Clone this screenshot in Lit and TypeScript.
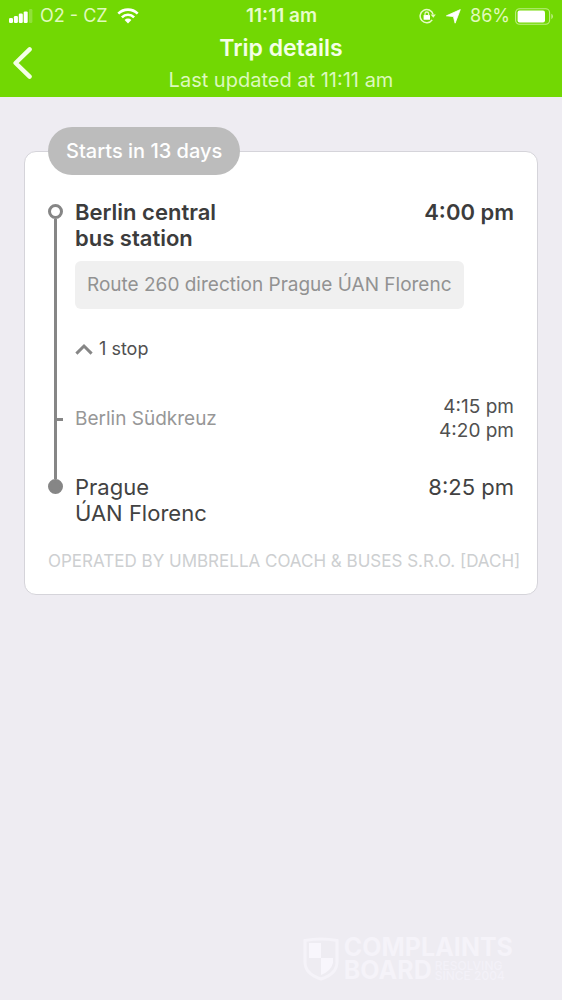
import { LitElement, html, css, svg } from "lit";
import { customElement, property, state } from "lit/decorators.js";

@customElement("status-bar")
class StatusBar extends LitElement {
  static styles = css`
    :host {
      display: grid;
      grid-template-columns: 1fr auto 1fr;
      align-items: center;
      height: 32px;
      padding: 0 8px 0 9px;
      font-size: 18px;
      line-height: 24px;
      color: #e0fabc;
    }
    .side {
      display: flex;
      align-items: center;
    }
    .carrier {
      margin: 0 9px 0 7px;
    }
    .clock {
      font-size: 19px;
      font-weight: 600;
      color: #e8fccb;
    }
    .right {
      justify-content: flex-end;
    }
    .lock {
      margin-right: 10px;
    }
    .arrow {
      margin-right: 9px;
    }
    .level {
      margin-right: 5px;
    }
    svg {
      display: block;
      flex: none;
    }
  `;

  render() {
    return html`
      <div class="side">
        <svg width="24" height="14" viewBox="0 0 24 14" fill="#fff" aria-label="Signal" role="img">
          <rect x="0" y="9" width="4" height="5" rx="1.2" />
          <rect x="4.9" y="7" width="4" height="7" rx="1.2" />
          <rect x="9.8" y="4.6" width="4" height="9.4" rx="1.2" />
          <rect x="14.7" y="2.4" width="4" height="11.6" rx="1.2" />
          <rect x="20" y="0" width="3.4" height="14" rx="1.2" opacity=".22" />
        </svg>
        <span class="carrier">O2 - CZ</span>
        <svg width="22" height="16" viewBox="0 0 22 16" fill="none" stroke="#fff" stroke-width="2.6" aria-label="Wi-Fi" role="img">
          <path d="M1.3 5.6a13.8 13.8 0 0 1 19.4 0" />
          <path d="M4.9 9.3a8.6 8.6 0 0 1 12.2 0" />
          <path d="M11 15.4 7.6 12a4.8 4.8 0 0 1 6.8 0Z" fill="#fff" stroke="none" />
        </svg>
      </div>
      <span class="clock">11:11 am</span>
      <div class="side right">
        <svg class="lock" width="17" height="16" viewBox="0 0 17 16" fill="none" stroke="#e6fbc6" stroke-width="1.5" aria-label="Rotation lock" role="img">
          <path d="M14.1 6.4A6.6 6.6 0 1 0 13.2 11.8" />
          <path d="M11.6 6.4h5.2l-2.5 3.4Z" fill="#e6fbc6" stroke="none" />
          <rect x="4.6" y="7" width="6.4" height="4.8" rx=".6" fill="#fff" stroke="none" />
          <path d="M6 7.4V5.8a1.8 1.8 0 0 1 3.6 0v1.6" stroke-width="1.3" />
        </svg>
        <svg class="arrow" width="15" height="15" viewBox="0 0 15 15" fill="#fff" aria-label="Location" role="img">
          <path d="M14.3.6 9.1 14.2 7.4 7.6.4 6.8Z" stroke="#fff" stroke-width=".8" stroke-linejoin="round" />
        </svg>
        <span class="level">86%</span>
        <svg width="39" height="17" viewBox="0 0 39 17" aria-label="Battery" role="img">
          <rect x=".6" y=".7" width="34" height="15.6" rx="4" fill="none" stroke="#bdee85" stroke-width="1.1" />
          <rect x="2.6" y="2.6" width="27.4" height="11.8" rx="2" fill="#fff" />
          <path d="M36.3 5.8a3 3 0 0 1 0 5.4Z" fill="#bdee85" />
        </svg>
      </div>
    `;
  }
}

@customElement("board-watermark")
class BoardWatermark extends LitElement {
  static styles = css`
    :host {
      display: flex;
      align-items: center;
      gap: 5px;
      color: #f5f3f9;
    }
    .name {
      display: grid;
      grid-template-columns: auto 1fr;
      column-gap: 3px;
      align-items: center;
      font-size: 25px;
      line-height: 23px;
      font-weight: 700;
    }
    .wide {
      grid-column: 1 / -1;
    }
    .tag {
      font-size: 12px;
      line-height: 10px;
      font-weight: 500;
      color: #f3f1f8;
    }
    svg {
      display: block;
      flex: none;
    }
  `;

  render() {
    return html`
      <svg width="36" height="44" viewBox="0 0 36 44" aria-hidden="true">
        <path d="M2 3.5Q18 .5 34 3.5V25Q34 37 18 42 2 37 2 25Z" fill="none" stroke="#f5f3f9" stroke-width="3" />
        <path d="M6 6h12v15H6ZM18 21h12v5q-2 8-12 12Z" fill="#f8f6fc" />
      </svg>
      <div class="name">
        <span class="wide">COMPLAINTS</span>
        <span>BOARD</span>
        <span class="tag">RESOLVING<br />SINCE 2004</span>
      </div>
    `;
  }
}

@customElement("trip-card")
class TripCard extends LitElement {
  @property() badge = "";
  @state() private open = true;

  static styles = css`
    :host {
      display: block;
    }
    .card {
      position: relative;
      padding: 47px 23px 21px;
      background: #fff;
      border: 1px solid #d5d4da;
      border-radius: 12px;
    }
    .badge {
      position: absolute;
      top: -25px;
      left: 23px;
      padding: 12px 18px;
      border-radius: 24px;
      background: #bcbcbc;
      color: #fff;
      font-size: 20px;
      line-height: 24px;
      font-weight: 500;
      white-space: nowrap;
    }
    .row {
      display: grid;
      grid-template-columns: 15px 1fr auto;
      column-gap: 12px;
    }
    .rail {
      display: flex;
      flex-direction: column;
      align-items: center;
    }
    .line {
      flex: 1;
      width: 3px;
      background: #868686;
    }
    .lead {
      flex: none;
      height: 5px;
    }
    .blank {
      background: none;
    }
    .dot {
      box-sizing: border-box;
      width: 15px;
      height: 15px;
      border: 3px solid #868686;
      border-radius: 50%;
    }
    .solid {
      background: #868686;
    }
    .tick {
      align-self: flex-end;
      width: 9px;
      height: 3px;
      background: #868686;
    }
    .place {
      font-size: 22px;
      line-height: 26px;
      color: #424242;
    }
    .strong {
      font-weight: 600;
      color: #3c3c3c;
    }
    .route {
      justify-self: start;
      margin: 10px 0 28px;
      padding: 12px;
      border-radius: 6px;
      background: #f0f0f0;
      color: #929292;
      font-size: 19px;
      line-height: 24px;
    }
    .toggle {
      display: flex;
      align-items: center;
      gap: 6px;
      justify-self: start;
      margin: 0 0 34px;
      padding: 0;
      border: 0;
      background: none;
      color: #505050;
      font: inherit;
      font-size: 18px;
      line-height: 24px;
      cursor: pointer;
    }
    .via {
      align-self: center;
      font-size: 19px;
      line-height: 24px;
      color: #979797;
    }
    .times {
      font-size: 19px;
      line-height: 24px;
      text-align: right;
      color: #505050;
    }
    .gap {
      height: 31px;
    }
    .operator {
      margin: 23px -12px 0 0;
      font-size: 17px;
      line-height: 24px;
      color: #cdcfd1;
      text-transform: uppercase;
    }
    .folded {
      transform: rotate(180deg);
    }
  `;

  render() {
    return html`
      <section class="card">
        <div class="badge">${this.badge}</div>
        <div class="row">
          <div class="rail">
            <span class="line lead blank"></span><span class="dot"></span><span class="line"></span>
          </div>
          <div class="place strong">Berlin central<br />bus station</div>
          <time class="place strong">4:00 pm</time>
        </div>
        <div class="row">
          <div class="rail"><span class="line"></span></div>
          <div class="route">Route 260 direction Prague ÚAN Florenc</div>
        </div>
        <div class="row">
          <div class="rail"><span class="line"></span></div>
          <button class="toggle" aria-expanded=${this.open} @click=${() => (this.open = !this.open)}>
            <svg class=${this.open ? "" : "folded"} width="18" height="12" viewBox="0 0 18 12" fill="none" stroke="#868686" stroke-width="3" aria-hidden="true">
              ${svg`<path d="M1.4 10.6 9 3l7.6 7.6" />`}
            </svg>
            1 stop
          </button>
        </div>
        ${this.open
          ? html`<div class="row">
              <div class="rail">
                <span class="line"></span><span class="tick"></span><span class="line"></span>
              </div>
              <div class="via">Berlin Südkreuz</div>
              <div class="times"><time>4:15 pm</time><br /><time>4:20 pm</time></div>
            </div>`
          : ""}
        <div class="row">
          <div class="rail gap"><span class="line"></span></div>
        </div>
        <div class="row">
          <div class="rail">
            <span class="line lead"></span><span class="dot solid"></span>
          </div>
          <div class="place">Prague<br />ÚAN Florenc</div>
          <time class="place">8:25 pm</time>
        </div>
        <p class="operator">Operated by Umbrella Coach &amp; Buses s.r.o. [DACH]</p>
      </section>
    `;
  }
}

@customElement("app-root")
class AppRoot extends LitElement {
  static styles = css`
    :host {
      display: flex;
      flex-direction: column;
      min-height: 100vh;
      background: #eeecf2;
      font-family: Inter, "Liberation Sans", sans-serif;
    }
    .top {
      background: #72d803;
      color: #f4ffe6;
    }
    .nav {
      display: grid;
      grid-template-columns: 48px 1fr 48px;
      align-items: center;
      padding-bottom: 1px;
    }
    .back {
      justify-self: start;
      padding: 0 0 0 12px;
      border: 0;
      background: none;
      cursor: pointer;
    }
    .back svg {
      display: block;
    }
    .titles {
      text-align: center;
    }
    .title {
      margin: 0;
      font-size: 23px;
      line-height: 32px;
      font-weight: 600;
    }
    .updated {
      margin: 0;
      font-size: 20px;
      line-height: 32px;
      color: #dcf9bd;
    }
    .trip {
      flex: 1;
      padding: 54px 24px 24px;
    }
    .mark {
      align-self: flex-end;
      margin: 0 49px 18px 0;
    }
  `;

  render() {
    return html`
      <header class="top">
        <status-bar></status-bar>
        <div class="nav">
          <button class="back" aria-label="Back">
            <svg width="22" height="34" viewBox="0 0 22 34" fill="none" stroke="#f4ffe6" stroke-width="4.4" stroke-linecap="round" stroke-linejoin="round" aria-hidden="true">
              <path d="M17.6 2.4 3.6 16l14 13.6" />
            </svg>
          </button>
          <div class="titles">
            <h1 class="title">Trip details</h1>
            <p class="updated">Last updated at 11:11 am</p>
          </div>
        </div>
      </header>
      <main class="trip">
        <trip-card badge="Starts in 13 days"></trip-card>
      </main>
      <board-watermark class="mark"></board-watermark>
    `;
  }
}
